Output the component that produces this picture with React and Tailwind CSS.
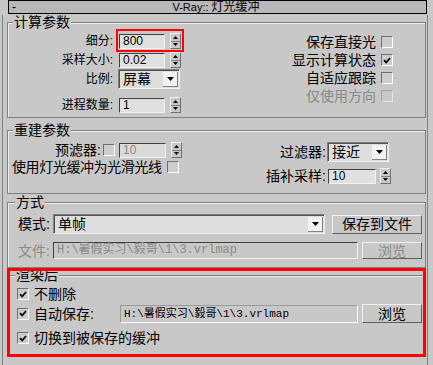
import React from 'react'

function Tri({ up }) {
  return (
    <svg width="7" height="4" viewBox="0 0 7 4">
      <path d={up ? 'M3.5 0L7 4H0z' : 'M0 0h7L3.5 4z'} fill="#000" />
    </svg>
  )
}

function Spinner() {
  return (
    <div className="w-[11px] h-[16px] flex flex-col border border-t-[#f0f0f0] border-l-[#f0f0f0] border-b-[#707070] border-r-[#707070] bg-[#c8c8c8]">
      <div className="flex-1 flex items-center justify-center border-b border-b-[#808080]">
        <svg width="5" height="3" viewBox="0 0 5 3"><path d="M2.5 0L5 3H0z" fill="#000" /></svg>
      </div>
      <div className="flex-1 flex items-center justify-center">
        <svg width="5" height="3" viewBox="0 0 5 3"><path d="M0 0h5L2.5 3z" fill="#000" /></svg>
      </div>
    </div>
  )
}

function Check({ on, dim }) {
  return (
    <div
      className={
        dim
          ? 'w-[12px] h-[12px] shrink-0 border border-t-[#a4a4a4] border-l-[#a4a4a4] border-b-[#e4e4e4] border-r-[#e4e4e4] bg-[#c8c8c8]'
          : 'w-[12px] h-[12px] shrink-0 flex items-center justify-center border border-t-[#707070] border-l-[#707070] border-b-white border-r-white bg-[#cdcdcd]'
      }
    >
      {on && (
        <svg width="8" height="7" viewBox="0 0 8 7">
          <path d="M1 3.2l2.2 2.3L7 1" stroke="#000" strokeWidth="1.8" fill="none" />
        </svg>
      )}
    </div>
  )
}

function Field({ children, className }) {
  return (
    <div className={`flex items-center pl-[3px] border border-t-[#404040] border-l-[#404040] border-b-[#f2f2f2] border-r-[#f2f2f2] text-[12px] leading-[13px] ${className}`}>
      {children}
    </div>
  )
}

function Drop({ children, className }) {
  return (
    <div className={`h-[20px] flex items-center border border-t-[#808080] border-l-[#808080] border-b-[#f0f0f0] border-r-[#f0f0f0] bg-[#dedede] shadow-[inset_1px_1px_0_#505050] ${className}`}>
      <span className="pl-[4px] text-[14px] leading-[16px]">{children}</span>
      <div className="ml-auto mr-[1px] w-[15px] h-[15px] flex items-center justify-center bg-[#f2f2f2] border-r border-b border-r-[#808080] border-b-[#808080]">
        <Tri />
      </div>
    </div>
  )
}

function Btn({ children, className }) {
  return (
    <div className={`flex items-center justify-center border border-t-[#f0f0f0] border-l-[#f0f0f0] border-b-[#606060] border-r-[#606060] text-[14px] leading-[16px] ${className}`}>
      {children}
    </div>
  )
}

function Group({ title, className, legendClass = 'ml-[5px]', children }) {
  return (
    <fieldset className={`ml-[4px] w-[419px] border border-[#808080] shadow-[inset_1px_1px_0_#ececec] ${className}`}>
      <legend className={`px-[1px] bg-[#c8c8c8] text-[14px] leading-[14px] ${legendClass}`}>{title}</legend>
      {children}
    </fieldset>
  )
}

export default function App() {
  return (
    <div className="relative w-[433px] h-[365px] overflow-hidden bg-[#c8c8c8] text-black font-['Liberation_Sans','Noto_Sans_CJK_SC',sans-serif]">
      {/* rollout title */}
      <div className="relative z-10 ml-[8px] w-[419px] h-[14px] flex items-center border border-black bg-[#b8b8b8]">
        <span className="pl-[3px] text-[12px] leading-[12px]">-</span>
        <span className="flex-1 text-center pr-[10px] text-[11px] leading-[12px]">
          V-Ray:: <span className="text-[12px]">灯光缓冲</span>
        </span>
      </div>

      <div className="-mt-[5px] ml-[2px] w-[426px] h-[353px] border-l border-r border-b border-[#808080]">
        {/* 计算参数 */}
        <Group title="计算参数" className="mt-[6px] h-[103px]">
          <div className="flex">
            <div className="w-[200px] flex flex-col">
              <div className="mt-[4px] h-[16px] flex items-center">
                <span className="w-[105px] text-right text-[12px] leading-[14px]">细分:</span>
                <Field className="ml-[6px] w-[46px] h-[15px] bg-[#e0e0e0]">800</Field>
                <div className="ml-[5px]"><Spinner /></div>
              </div>
              <div className="mt-[3px] h-[16px] flex items-center">
                <span className="w-[105px] text-right text-[12px] leading-[14px]">采样大小:</span>
                <Field className="ml-[6px] w-[46px] h-[15px] bg-[#e0e0e0]">0.02</Field>
                <div className="ml-[5px]"><Spinner /></div>
              </div>
              <div className="mt-[1px] h-[20px] flex items-center">
                <span className="w-[105px] text-right text-[12px] leading-[14px]">比例:</span>
                <Drop className="ml-[5px] w-[62px]">屏幕</Drop>
              </div>
              <div className="mt-[8px] h-[16px] flex items-center">
                <span className="w-[105px] text-right text-[12px] leading-[14px]">进程数量:</span>
                <Field className="ml-[6px] w-[46px] h-[15px] bg-[#e0e0e0]">1</Field>
                <div className="ml-[5px]"><Spinner /></div>
              </div>
            </div>
            <div className="ml-auto mr-[32px] pt-[7px] flex flex-col gap-[6px] text-[14px] leading-[14px]">
              <div className="h-[12px] flex items-center justify-end gap-[5px]"><span>保存直接光</span><Check /></div>
              <div className="h-[12px] flex items-center justify-end gap-[5px]"><span>显示计算状态</span><Check on /></div>
              <div className="h-[12px] flex items-center justify-end gap-[5px]"><span>自适应跟踪</span><Check /></div>
              <div className="h-[12px] flex items-center justify-end gap-[5px]"><span className="text-[#8a8a8a]">仅使用方向</span><Check dim /></div>
            </div>
          </div>
        </Group>

        {/* 重建参数 */}
        <Group title="重建参数" className="mt-[5px] h-[71px]">
          <div className="flex">
            <div className="w-[252px] flex flex-col text-[14px] leading-[14px]">
              <div className="mt-[5px] h-[16px] flex items-center">
                <span className="w-[93px] text-right">预滤器:</span>
                <div className="ml-[2px]"><Check /></div>
                <Field className="ml-[4px] w-[47px] h-[15px] bg-[#dadada] text-[#8a8a8a]">10</Field>
                <div className="ml-[5px]"><Spinner /></div>
              </div>
              <div className="mt-[2px] h-[14px] flex items-center pl-[4px]">
                <span className="tracking-[-0.4px]">使用灯光缓冲为光滑光线</span>
                <div className="ml-[5px]"><Check /></div>
              </div>
            </div>
            <div className="flex flex-col text-[14px] leading-[14px]">
              <div className="mt-[5px] h-[20px] flex items-center">
                <span className="w-[66px] text-right">过滤器:</span>
                <Drop className="ml-[1px] w-[62px]">接近</Drop>
              </div>
              <div className="mt-[6px] h-[16px] flex items-center">
                <span className="w-[66px] text-right">插补采样:</span>
                <Field className="ml-[2px] w-[48px] h-[15px] bg-[#e0e0e0]">10</Field>
                <div className="ml-[4px]"><Spinner /></div>
              </div>
            </div>
          </div>
        </Group>

        {/* 方式 */}
        <Group title="方式" className="mt-[1px] h-[73px]" legendClass="ml-[7px]">
          <div className="mt-[5px] h-[20px] flex items-center pl-[10px] text-[14px] leading-[14px]">
            <span className="w-[35px]">模式:</span>
            <Drop className="w-[272px]">单帧</Drop>
            <Btn className="ml-[7px] w-[90px] h-[19px]">保存到文件</Btn>
          </div>
          <div className="mt-[8px] h-[17px] flex items-center pl-[10px] text-[14px] leading-[14px]">
            <span className="w-[35px] text-[#8a8a8a]">文件:</span>
            <Field className="w-[305px] h-[17px] text-[#8a8a8a] font-['Liberation_Mono','Noto_Sans_CJK_SC',monospace] text-[12.5px]">H:\暑假实习\毅哥\1\3.vrlmap</Field>
            <Btn className="ml-[4px] w-[60px] h-[17px] text-[#8a8a8a]">浏览</Btn>
          </div>
        </Group>

        {/* 渲染后 */}
        <Group title="渲染后" className="h-[88px]" legendClass="ml-[7px]">
          <div className="mt-[6px] h-[12px] flex items-center pl-[9px] text-[14px] leading-[14px]">
            <Check on />
            <span className="ml-[5px]">不删除</span>
          </div>
          <div className="mt-[4px] h-[19px] flex items-center pl-[9px] text-[14px] leading-[14px]">
            <div className="w-[103px] flex items-center">
              <Check on />
              <span className="ml-[5px]">自动保存:</span>
            </div>
            <div className="w-[238px] h-[18px] flex items-center pl-[3px] border border-t-[#9a9a9a] border-l-[#9a9a9a] border-b-white border-r-white font-['Liberation_Mono','Noto_Sans_CJK_SC',monospace] text-[11px] leading-[12px]">
              H:\暑假实习\毅哥\1\3.vrlmap
            </div>
            <Btn className="ml-[4px] w-[60px] h-[19px]">浏览</Btn>
          </div>
          <div className="mt-[9px] h-[12px] flex items-center pl-[9px] text-[14px] leading-[14px]">
            <Check on />
            <span className="ml-[5px]">切换到被保存的缓冲</span>
          </div>
        </Group>
      </div>

      {/* red annotation boxes */}
      <div className="absolute left-[116px] top-[29px] w-[68px] h-[23px] border-2 border-[#ff0000] pointer-events-none" />
      <div className="absolute left-[7px] top-[268px] w-[419px] h-[89px] border-[3px] border-[#ff0000] pointer-events-none" />
    </div>
  )
}
